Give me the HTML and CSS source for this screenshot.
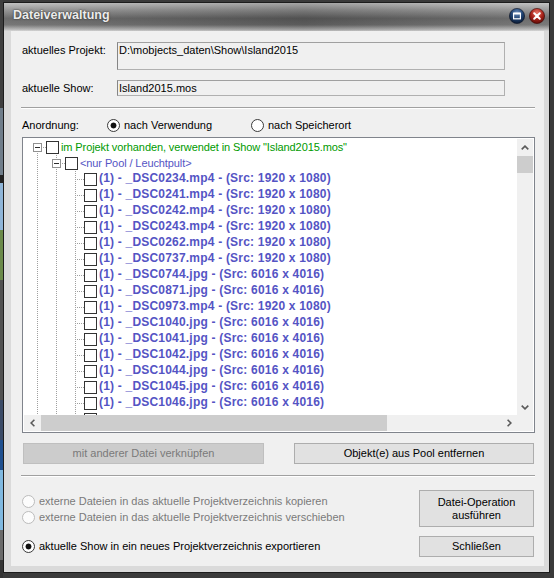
FILE: index.html
```html
<!DOCTYPE html>
<html lang="de">
<head>
<meta charset="utf-8">
<title>Dateiverwaltung</title>
<link rel="stylesheet" href="styles.css">
</head>
<body>
<div class="window">
  <div class="titlebar">
    <span class="title">Dateiverwaltung</span>
    <div class="tb-buttons">
      <svg class="tb-btn" width="16" height="16" viewBox="0 0 16 16">
        <defs>
          <radialGradient id="gb" cx="50%" cy="30%" r="70%">
            <stop offset="0" stop-color="#6d8fbd"/>
            <stop offset="0.55" stop-color="#1f416f"/>
            <stop offset="1" stop-color="#0a1830"/>
          </radialGradient>
        </defs>
        <circle cx="8" cy="8" r="7.6" fill="url(#gb)" stroke="#0b1426" stroke-width="0.6"/>
        <rect x="4.6" y="5.2" width="6.8" height="5.6" fill="none" stroke="#fff" stroke-width="1.2"/>
        <path d="M4.6 5.6h6.8" stroke="#fff" stroke-width="1.8"/>
      </svg>
      <svg class="tb-btn" width="16" height="16" viewBox="0 0 16 16">
        <defs>
          <radialGradient id="gr" cx="50%" cy="30%" r="70%">
            <stop offset="0" stop-color="#e8786a"/>
            <stop offset="0.55" stop-color="#a8231a"/>
            <stop offset="1" stop-color="#5c0b07"/>
          </radialGradient>
        </defs>
        <circle cx="8" cy="8" r="7.6" fill="url(#gr)" stroke="#3d0604" stroke-width="0.6"/>
        <path d="M5.2 5.2 L10.8 10.8 M10.8 5.2 L5.2 10.8" stroke="#fff" stroke-width="2" stroke-linecap="round"/>
      </svg>
    </div>
  </div>

  <div class="client">
    <div class="field-row">
      <span class="label">aktuelles Projekt:</span>
      <div class="textbox tall">D:\mobjects_daten\Show\Island2015</div>
    </div>
    <div class="field-row second">
      <span class="label">aktuelle Show:</span>
      <div class="textbox">Island2015.mos</div>
    </div>

    <div class="sep"></div>

    <div class="order-row">
      <span class="order-label">Anordnung:</span>
      <label class="radio first"><span class="rb on"></span>nach Verwendung</label>
      <label class="radio"><span class="rb"></span>nach Speicherort</label>
    </div>

    <div class="tree">
      <div class="tree-main">
        <div class="tree-view">
          <div class="tr">
            <span class="c root"><span class="exp"></span></span>
            <span class="cb"></span><span class="tx green">im Projekt vorhanden, verwendet in Show "Island2015.mos"</span>
          </div>
          <div class="tr">
            <span class="c v"></span>
            <span class="c t"><span class="exp"></span></span>
            <span class="cb"></span><span class="tx pool">&lt;nur Pool / Leuchtpult&gt;</span>
          </div>
          <div class="tr"><span class="c v"></span><span class="c v"></span><span class="c t"></span><span class="cb"></span><span class="tx item">(1) - _DSC0234.mp4 - (Src: 1920 x 1080)</span></div>
          <div class="tr"><span class="c v"></span><span class="c v"></span><span class="c t"></span><span class="cb"></span><span class="tx item">(1) - _DSC0241.mp4 - (Src: 1920 x 1080)</span></div>
          <div class="tr"><span class="c v"></span><span class="c v"></span><span class="c t"></span><span class="cb"></span><span class="tx item">(1) - _DSC0242.mp4 - (Src: 1920 x 1080)</span></div>
          <div class="tr"><span class="c v"></span><span class="c v"></span><span class="c t"></span><span class="cb"></span><span class="tx item">(1) - _DSC0243.mp4 - (Src: 1920 x 1080)</span></div>
          <div class="tr"><span class="c v"></span><span class="c v"></span><span class="c t"></span><span class="cb"></span><span class="tx item">(1) - _DSC0262.mp4 - (Src: 1920 x 1080)</span></div>
          <div class="tr"><span class="c v"></span><span class="c v"></span><span class="c t"></span><span class="cb"></span><span class="tx item">(1) - _DSC0737.mp4 - (Src: 1920 x 1080)</span></div>
          <div class="tr"><span class="c v"></span><span class="c v"></span><span class="c t"></span><span class="cb"></span><span class="tx item">(1) - _DSC0744.jpg - (Src: 6016 x 4016)</span></div>
          <div class="tr"><span class="c v"></span><span class="c v"></span><span class="c t"></span><span class="cb"></span><span class="tx item">(1) - _DSC0871.jpg - (Src: 6016 x 4016)</span></div>
          <div class="tr"><span class="c v"></span><span class="c v"></span><span class="c t"></span><span class="cb"></span><span class="tx item">(1) - _DSC0973.mp4 - (Src: 1920 x 1080)</span></div>
          <div class="tr"><span class="c v"></span><span class="c v"></span><span class="c t"></span><span class="cb"></span><span class="tx item">(1) - _DSC1040.jpg - (Src: 6016 x 4016)</span></div>
          <div class="tr"><span class="c v"></span><span class="c v"></span><span class="c t"></span><span class="cb"></span><span class="tx item">(1) - _DSC1041.jpg - (Src: 6016 x 4016)</span></div>
          <div class="tr"><span class="c v"></span><span class="c v"></span><span class="c t"></span><span class="cb"></span><span class="tx item">(1) - _DSC1042.jpg - (Src: 6016 x 4016)</span></div>
          <div class="tr"><span class="c v"></span><span class="c v"></span><span class="c t"></span><span class="cb"></span><span class="tx item">(1) - _DSC1044.jpg - (Src: 6016 x 4016)</span></div>
          <div class="tr"><span class="c v"></span><span class="c v"></span><span class="c t"></span><span class="cb"></span><span class="tx item">(1) - _DSC1045.jpg - (Src: 6016 x 4016)</span></div>
          <div class="tr"><span class="c v"></span><span class="c v"></span><span class="c t"></span><span class="cb"></span><span class="tx item">(1) - _DSC1046.jpg - (Src: 6016 x 4016)</span></div>
          <div class="tr"><span class="c v"></span><span class="c v"></span><span class="c t"></span><span class="cb"></span></div>
        </div>
        <div class="vscroll">
          <div class="arrow">
            <svg width="8" height="5" viewBox="0 0 8 5"><path d="M0.7 4.4 L4 1.1 L7.3 4.4" fill="none" stroke="#5a5a5a" stroke-width="1.6"/></svg>
          </div>
          <div class="vthumb"></div>
          <div class="track"></div>
          <div class="arrow">
            <svg width="8" height="5" viewBox="0 0 8 5"><path d="M0.7 0.6 L4 3.9 L7.3 0.6" fill="none" stroke="#5a5a5a" stroke-width="1.6"/></svg>
          </div>
        </div>
      </div>
      <div class="hscroll-row">
        <div class="hscroll">
          <div class="arrow">
            <svg width="5" height="8" viewBox="0 0 5 8"><path d="M4.4 0.7 L1.1 4 L4.4 7.3" fill="none" stroke="#5a5a5a" stroke-width="1.6"/></svg>
          </div>
          <div class="hthumb"></div>
          <div class="track"></div>
          <div class="arrow">
            <svg width="5" height="8" viewBox="0 0 5 8"><path d="M0.6 0.7 L3.9 4 L0.6 7.3" fill="none" stroke="#5a5a5a" stroke-width="1.6"/></svg>
          </div>
        </div>
        <div class="corner"></div>
      </div>
    </div>

    <div class="btn-row">
      <button class="btn disabled wide1">mit anderer Datei verknüpfen</button>
      <button class="btn wide2">Objekt(e) aus Pool entfernen</button>
    </div>

    <div class="sep"></div>

    <div class="bottom">
      <div class="ops">
        <label class="radio op dis"><span class="rb dis"></span>externe Dateien in das aktuelle Projektverzeichnis kopieren</label>
        <label class="radio op dis"><span class="rb dis"></span>externe Dateien in das aktuelle Projektverzeichnis verschieben</label>
        <label class="radio op last"><span class="rb on"></span>aktuelle Show in ein neues Projektverzeichnis exportieren</label>
      </div>
      <div class="actions">
        <button class="btn action tall">Datei-Operation<br>ausführen</button>
        <button class="btn action">Schließen</button>
      </div>
    </div>
  </div>
</div>
</body>
</html>
```

FILE: styles.css
```css
* { box-sizing: border-box; }

html, body { margin: 0; padding: 0; }

body {
  width: 554px;
  height: 578px;
  overflow: hidden;
  font-family: "Liberation Sans", Arial, sans-serif;
  font-size: 11px;
  color: #000;
  background:
    linear-gradient(to bottom,
      #3e3e3e 0, #3e3e3e 108px,
      #6f7d8a 108px, #6f7d8a 175px,
      #222 175px, #222 183px,
      #8fb5d8 183px, #8fb5d8 230px,
      #6b8a4a 230px, #6b8a4a 280px,
      #505050 280px, #505050 400px,
      #3b4b66 400px, #3b4b66 440px,
      #1e4f8f 440px, #1e4f8f 470px,
      #7fb8e0 470px, #7fb8e0 530px,
      #6a6a6a 530px, #6a6a6a 560px,
      #333 560px) 0 0 / 3px 100% no-repeat,
    #3a3a3a;
}

/* ---------- window frame ---------- */
.window {
  margin: 2px 0 0 3px;
  width: 547px;
  height: 571px;
  border: 1px solid #1c1c1c;
  background: #dadada;
  padding: 0 5px 6px 7px;
  display: flex;
  flex-direction: column;
}

.titlebar {
  flex: none;
  height: 28px;
  margin: 0 -5px 0 -7px;
  padding: 0 4px 0 9px;
  display: flex;
  align-items: flex-start;
  justify-content: space-between;
  background:
    linear-gradient(to right, rgba(255,255,255,0.10), rgba(0,0,0,0.12) 55%, rgba(255,255,255,0.12)),
    linear-gradient(to bottom, #bcbcbc 0%, #8c8c8c 25%, #5c5c5c 55%, #686868 78%, #b4b4b4 95%, #d4d4d4 100%);
}

.title {
  margin-top: 5px;
  line-height: 15px;
  font-size: 12.5px;
  font-weight: bold;
  color: #ececec;
  text-shadow: 0 0 2px #3a3a3a, 0 0 1px #3a3a3a;
}

.tb-buttons {
  display: flex;
  gap: 4px;
  margin-top: 5px;
}

.tb-btn { display: block; }

/* ---------- client area ---------- */
.client {
  flex: 1;
  background: #f0f0f0;
  padding-top: 11px;
}

.field-row {
  display: flex;
  margin-left: 11px;
}

.field-row.second { margin-top: 10px; }

.label {
  width: 95px;
  padding-top: 2px;
  line-height: 13px;
}

.textbox {
  width: 388px;
  height: 16px;
  border: 1px solid #b0b0b0;
  border-left-color: #858585;
  border-top-color: #a0a0a0;
  padding: 1px 0 0 1px;
  line-height: 13px;
  white-space: nowrap;
}

.textbox.tall { height: 28px; }

.sep {
  margin: 11px 0 0 10px;
  width: 514px;
  height: 2px;
  border-top: 1px solid #a0a0a0;
  border-bottom: 1px solid #ffffff;
}

/* ---------- radio buttons ---------- */
.order-row {
  display: flex;
  align-items: center;
  margin: 10px 0 0 11px;
  height: 13px;
  line-height: 13px;
}

.order-label { width: 85px; }

.radio {
  display: flex;
  align-items: center;
  gap: 4px;
  white-space: nowrap;
}

.radio.first { width: 144px; }

.rb {
  flex: none;
  width: 13px;
  height: 13px;
  border-radius: 50%;
  border: 1px solid #3a3a3a;
  background: #fff;
}

.rb.on {
  background: radial-gradient(circle at center, #111 0, #111 2.6px, #fff 3.3px);
}

.rb.dis {
  border-color: #bcbcbc;
  background: #fcfcfc;
}

/* ---------- tree view ---------- */
.tree {
  margin: 5px 0 0 11px;
  width: 513px;
  height: 296px;
  border: 1px solid #80848c;
  padding: 1px;
  background: #fff;
  display: flex;
  flex-direction: column;
}

.tree-main {
  display: flex;
  height: 276px;
}

.tree-view {
  width: 493px;
  height: 276px;
  overflow: hidden;
  padding-left: 3px;
  --vd: repeating-linear-gradient(to bottom, #a0a0a0 0, #a0a0a0 1px, transparent 1px, transparent 2px);
  --hd: repeating-linear-gradient(to right, #a0a0a0 0, #a0a0a0 1px, transparent 1px, transparent 2px);
}

.tr {
  display: flex;
  align-items: flex-start;
  height: 16px;
  white-space: nowrap;
}

.c {
  flex: none;
  width: 19px;
  height: 16px;
  background-repeat: no-repeat;
}

.c.v {
  background-image: var(--vd);
  background-size: 1px 16px;
  background-position: 10px 0;
}

.c.t {
  background-image: var(--vd), var(--hd);
  background-size: 1px 16px, 9px 1px;
  background-position: 10px 0, 10px 8px;
}

.c.root {
  background-image: var(--vd), var(--hd);
  background-size: 1px 8px, 9px 1px;
  background-position: 10px 8px, 10px 8px;
}

.exp {
  display: block;
  width: 9px;
  height: 9px;
  margin: 4px 0 0 6px;
  border: 1px solid #919191;
  background: linear-gradient(#2e2e2e, #2e2e2e) center / 5px 1px no-repeat, #fff;
}

.cb {
  flex: none;
  width: 13px;
  height: 13px;
  margin-top: 2px;
  border: 1px solid #333;
  background: #fff;
}

.tx {
  margin-left: 2px;
  line-height: 16px;
  letter-spacing: -0.1px;
}

.tx.green { color: #009a00; }
.tx.pool { color: #5454c4; }

.tx.item {
  color: #5454c4;
  font-weight: bold;
  font-size: 12px;
  letter-spacing: 0.2px;
  line-height: 15px;
}

/* ---------- scrollbars ---------- */
.vscroll {
  width: 16px;
  height: 276px;
  background: #f0f0f0;
  display: flex;
  flex-direction: column;
}

.vscroll .arrow {
  height: 16px;
  display: flex;
  align-items: center;
  justify-content: center;
}

.vthumb {
  height: 17px;
  margin-top: 1px;
  background: #cdcdcd;
}

.track { flex: 1; }

.hscroll-row {
  display: flex;
  height: 16px;
}

.hscroll {
  width: 493px;
  background: #f0f0f0;
  display: flex;
}

.hscroll .arrow {
  width: 16px;
  display: flex;
  align-items: center;
  justify-content: center;
}

.hthumb {
  width: 346px;
  margin-left: 1px;
  background: #cdcdcd;
}

.corner {
  width: 16px;
  background: #f0f0f0;
}

/* ---------- buttons ---------- */
.btn {
  display: block;
  height: 21px;
  padding: 0;
  border: 1px solid #adadad;
  background: #e1e1e1;
  font-family: "Liberation Sans", Arial, sans-serif;
  font-size: 11px;
  color: #000;
  line-height: 13px;
  text-align: center;
}

.btn.disabled {
  background: #cccccc;
  border-color: #bfbfbf;
  color: #7a7a7a;
}

.btn-row {
  display: flex;
  margin: 10px 0 0 12px;
}

.wide1 { width: 241px; }
.wide2 { width: 240px; margin-left: 30px; }

/* ---------- bottom section ---------- */
.bottom {
  display: flex;
  margin-left: 11px;
}

.ops {
  width: 397px;
  padding-top: 16px;
}

.radio.op {
  height: 16px;
  line-height: 16px;
}

.radio.op.dis { color: #7a7a7a; }
.radio.op.last { margin-top: 13px; }

.actions {
  display: flex;
  flex-direction: column;
  gap: 9px;
  margin-top: 13px;
}

.btn.action { width: 115px; }

.btn.tall {
  height: 37px;
  line-height: 12.5px;
}
```
